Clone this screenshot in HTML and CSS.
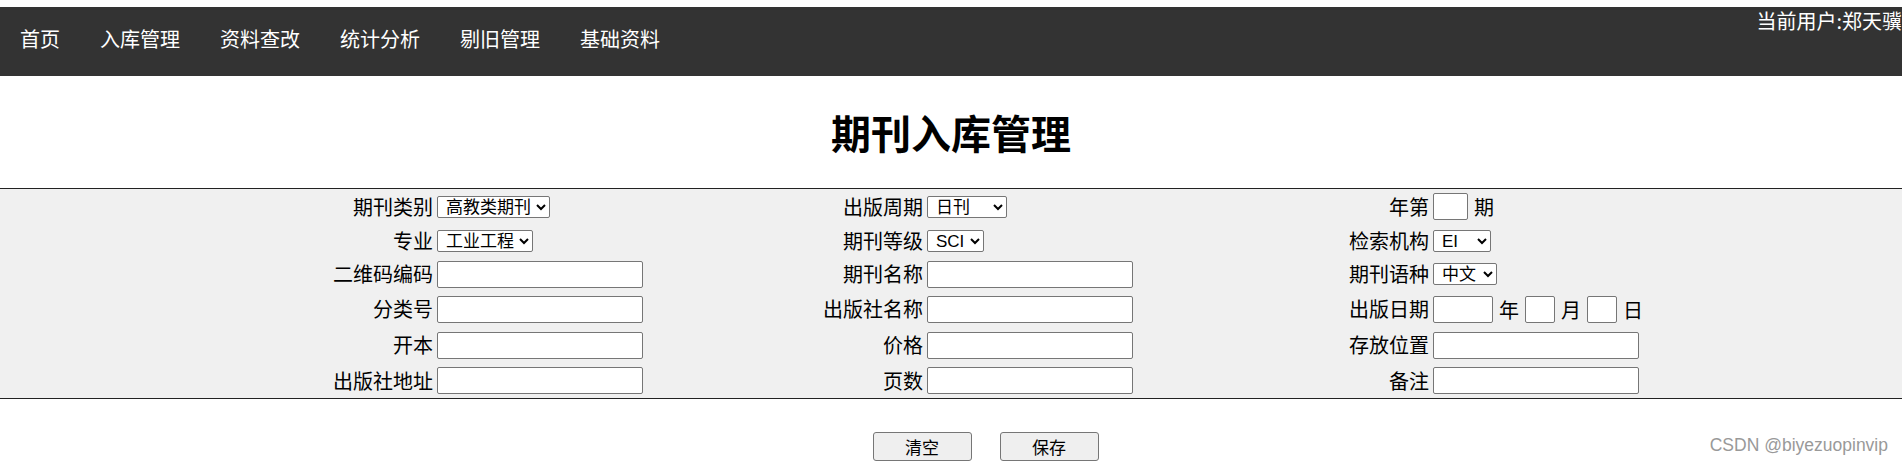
FILE: index.html
```html
<!DOCTYPE html>
<html lang="zh-CN">
<head>
    <meta charset="UTF-8">
    <meta name="viewport" content="width=device-width, initial-scale=1.0">
    <title>期刊入库管理</title>
    <link rel="stylesheet" href="styles.css">
</head>
<body>
    <!-- 顶部导航 -->
    <div class="topbar">
        <ul class="menu">
            <li>首页</li>
            <li>入库管理</li>
            <li>资料查改</li>
            <li>统计分析</li>
            <li>剔旧管理</li>
            <li>基础资料</li>
        </ul>
        <div class="user">当前用户:郑天骥</div>
    </div>

    <h1 class="page-title">期刊入库管理</h1>

    <!-- 期刊信息表单 -->
    <form class="entry-form">
        <!-- 第一行 -->
        <label class="lbl">期刊类别</label>
        <div class="fld">
            <select class="sel sel-type"><option>高教类期刊</option></select>
        </div>
        <label class="lbl">出版周期</label>
        <div class="fld">
            <select class="sel sel-cycle"><option>日刊</option></select>
        </div>
        <label class="lbl">年第</label>
        <div class="fld">
            <input type="text" class="txt txt-issue"><span>期</span>
        </div>

        <!-- 第二行 -->
        <label class="lbl">专业</label>
        <div class="fld">
            <select class="sel sel-major"><option>工业工程</option></select>
        </div>
        <label class="lbl">期刊等级</label>
        <div class="fld">
            <select class="sel sel-level"><option>SCI</option></select>
        </div>
        <label class="lbl">检索机构</label>
        <div class="fld">
            <select class="sel sel-index"><option>EI</option></select>
        </div>

        <!-- 第三行 -->
        <label class="lbl">二维码编码</label>
        <div class="fld"><input type="text" class="txt"></div>
        <label class="lbl">期刊名称</label>
        <div class="fld"><input type="text" class="txt"></div>
        <label class="lbl">期刊语种</label>
        <div class="fld">
            <select class="sel sel-lang"><option>中文</option></select>
        </div>

        <!-- 第四行 -->
        <label class="lbl">分类号</label>
        <div class="fld"><input type="text" class="txt"></div>
        <label class="lbl">出版社名称</label>
        <div class="fld"><input type="text" class="txt"></div>
        <label class="lbl">出版日期</label>
        <div class="fld">
            <input type="text" class="txt txt-year"><span>年</span>
            <input type="text" class="txt txt-day"><span>月</span>
            <input type="text" class="txt txt-day"><span>日</span>
        </div>

        <!-- 第五行 -->
        <label class="lbl">开本</label>
        <div class="fld"><input type="text" class="txt"></div>
        <label class="lbl">价格</label>
        <div class="fld"><input type="text" class="txt"></div>
        <label class="lbl">存放位置</label>
        <div class="fld"><input type="text" class="txt"></div>

        <!-- 第六行 -->
        <label class="lbl">出版社地址</label>
        <div class="fld"><input type="text" class="txt"></div>
        <label class="lbl">页数</label>
        <div class="fld"><input type="text" class="txt"></div>
        <label class="lbl">备注</label>
        <div class="fld"><input type="text" class="txt"></div>
    </form>

    <div class="actions">
        <button type="button" class="btn">清空</button>
        <button type="button" class="btn">保存</button>
    </div>

    <div class="watermark">CSDN @biyezuopinvip</div>
</body>
</html>
```

FILE: styles.css
```css
/* 页面基础 */
body {
    margin: 0;
    font-family: "Noto Sans CJK SC", sans-serif;
    color: #000;
    background: #fff;
    overflow: hidden;
}

/* 顶部导航 */
.topbar {
    margin-top: 7px;
    height: 69px;
    background: #333333;
    display: flex;
    overflow: hidden;
}

.menu {
    list-style: none;
    margin: 0;
    padding: 17px 0 0 0;
    display: flex;
}

.menu li {
    padding: 0 20px;
    color: #ffffff;
    font-size: 20px;
    line-height: 29px;
}

.user {
    margin-left: auto;
    margin-top: -1px;
    margin-right: 0;
    align-self: flex-start;
    color: #ffffff;
    font-size: 20px;
    line-height: 29px;
    white-space: nowrap;
}

/* 标题 */
.page-title {
    margin: 27px 0;
    font-size: 40px;
    line-height: 58px;
    font-weight: bold;
    text-align: center;
}

/* 表单区域 */
.entry-form {
    display: grid;
    grid-template-columns: 437px 250px 240px 250px 256px 1fr;
    grid-template-rows: 35px 33px 34px 36px 36px 35px;
    align-items: center;
    background: #f0f0f0;
    border-top: 1px solid #222;
    border-bottom: 1px solid #222;
}

.lbl {
    text-align: right;
    padding-right: 4px;
    font-size: 20px;
    line-height: 28px;
    white-space: nowrap;
}

.fld {
    display: flex;
    align-items: center;
    gap: 6px;
    font-size: 20px;
}

.txt {
    box-sizing: border-box;
    width: 206px;
    height: 27px;
    margin: 0;
    padding: 0 3px;
    border: 1px solid #767676;
    border-radius: 2px;
    background: #fff;
}

.txt-issue {
    width: 35px;
}

.txt-year {
    width: 60px;
}

.txt-day {
    width: 30px;
}

/* 下拉框 */
.sel {
    box-sizing: border-box;
    height: 22px;
    margin: 0;
    padding: 0 0 0 4px;
    border: 1px solid #767676;
    border-radius: 2px;
    background: #fff;
    color: #000;
    font-family: "Liberation Sans", "Noto Sans CJK SC", sans-serif;
    font-size: 17px;
}

.sel-type { width: 113px; }
.sel-cycle { width: 80px; }
.sel-major { width: 96px; }
.sel-level { width: 57px; }
.sel-index { width: 58px; }
.sel-lang { width: 64px; }

/* 按钮 */
.actions {
    display: flex;
    justify-content: center;
    gap: 28px;
    padding-left: 69px;
    margin-top: 33px;
}

.btn {
    width: 99px;
    height: 29px;
    padding: 0;
    background: #efefef;
    border: 1px solid #767676;
    border-radius: 3px;
    font-family: "Noto Sans CJK SC", sans-serif;
    font-size: 17px;
    color: #000;
}

.watermark {
    position: absolute;
    top: 435px;
    right: 14px;
    font-family: "Liberation Sans", sans-serif;
    font-size: 17.5px;
    line-height: 20px;
    color: #999;
}
```
